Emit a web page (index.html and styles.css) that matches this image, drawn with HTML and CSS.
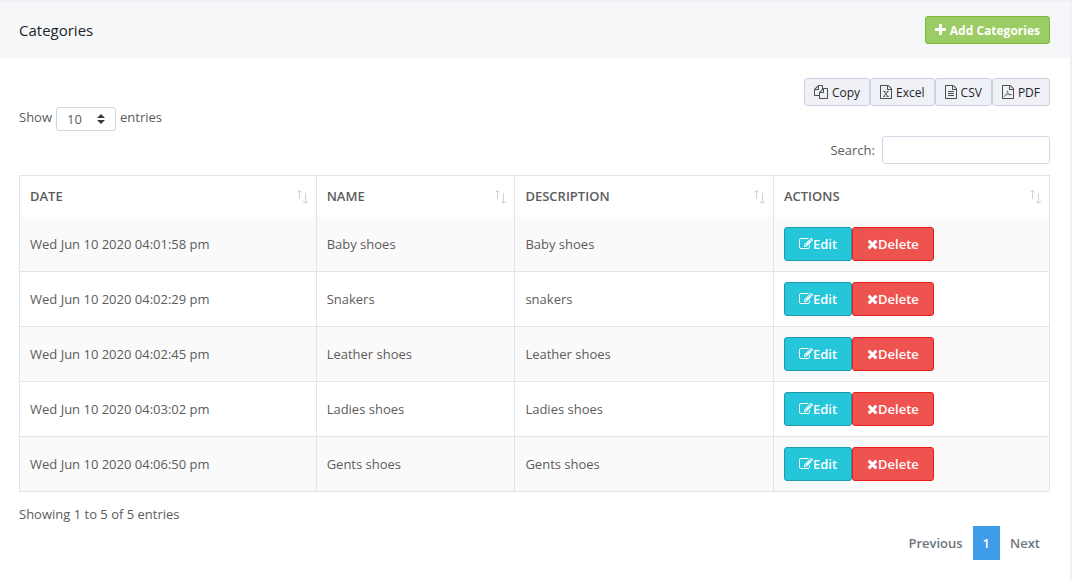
FILE: index.html
```html
<!DOCTYPE html>
<html lang="en">
<head>
    <meta charset="UTF-8">
    <meta name="viewport" content="width=device-width, initial-scale=1.0">
    <title>Categories</title>
    <link rel="stylesheet" href="styles.css">
</head>
<body>
    <svg class="sprite" aria-hidden="true">
        <symbol id="plus" viewBox="192 0 1408 1792"><path d="M1600 736v192q0 40-28 68t-68 28h-416v416q0 40-28 68t-68 28h-192q-40 0-68-28t-28-68v-416h-416q-40 0-68-28t-28-68v-192q0-40 28-68t68-28h416v-416q0-40 28-68t68-28h192q40 0 68 28t28 68v416h416q40 0 68 28t28 68z"/></symbol>
        <symbol id="times" viewBox="192 0 1408 1792"><path d="M1490 1322q0 40-28 68l-136 136q-28 28-68 28t-68-28l-294-294-294 294q-28 28-68 28t-68-28l-136-136q-28-28-28-68t28-68l294-294-294-294q-28-28-28-68t28-68l136-136q28-28 68-28t68 28l294 294 294-294q28-28 68-28t68 28l136 136q28 28 28 68t-28 68l-294 294 294 294q28 28 28 68z"/></symbol>
        <symbol id="edit" viewBox="0 0 1792 1792"><path d="M888 1184l116-116-152-152-116 116v56h96v96h56zm440-720q-16-16-33 1l-350 350q-17 17-1 33t33-1l350-350q17-17 1-33zm80 594v190q0 119-84.500 203.500t-203.500 84.500h-832q-119 0-203.500-84.500t-84.500-203.500v-832q0-119 84.500-203.500t203.500-84.500h832q63 0 117 25 15 7 18 23 3 17-9 29l-49 49q-14 14-32 8-23-6-45-6h-832q-66 0-113 47t-47 113v832q0 66 47 113t113 47h832q66 0 113-47t47-113v-126q0-13 9-22l64-64q15-15 35-7t20 29zm-96-738l288 288-672 672h-288v-288zm444 132l-92 92-288-288 92-92q28-28 68-28t68 28l152 152q28 28 28 68t-28 68z"/></symbol>
        <symbol id="copy" viewBox="0 0 1792 1792"><path d="M1696 384q40 0 68 28t28 68v1216q0 40-28 68t-68 28h-960q-40 0-68-28t-28-68v-288h-544q-40 0-68-28t-28-68v-672q0-40 20-88t48-76l408-408q28-28 76-48t88-20h416q40 0 68 28t28 68v328q68-40 128-40h416zm-544 213l-299 299h299v-299zm-640-384l-299 299h299v-299zm196 647l316-316v-416h-384v416q0 40-28 68t-68 28h-416v640h512v-256q0-40 20-88t48-76zm956 804v-1152h-384v416q0 40-28 68t-68 28h-416v640h896z"/></symbol>
        <symbol id="file" viewBox="128 0 1536 1792"><path d="M1596 380q28 28 48 76t20 88v1152q0 40-28 68t-68 28h-1344q-40 0-68-28t-28-68v-1600q0-40 28-68t68-28h896q40 0 88 20t76 48zm-444-244v376h376q-10-29-22-41l-313-313q-12-12-41-22zm384 1528v-1024h-416q-40 0-68-28t-28-68v-416h-768v1536h1280z"/></symbol>
        <symbol id="excel" viewBox="128 0 1536 1792"><use href="#file" x="128" width="1536" height="1792"/><path fill="none" stroke="currentColor" stroke-width="120" d="M640 820l500 640M1130 820l-500 640M540 820h270M980 820h260M540 1460h240M960 1460h290"/></symbol>
        <symbol id="csv" viewBox="128 0 1536 1792"><use href="#file" x="128" width="1536" height="1792"/><path d="M512 768h768v128h-768zM512 1024h768v128h-768zM512 1280h768v128h-768z"/></symbol>
        <symbol id="pdf" viewBox="128 0 1536 1792"><use href="#file" x="128" width="1536" height="1792"/><path fill="none" stroke="currentColor" stroke-width="80" d="M860 720q-60 0-40 130 30 200 180 340 110 90 260 100 100 0 100-50 0-70-220-60-330 10-560 120-150 80-170 160 40 60 150-100 190-270 300-500 50-130 0-140z"/></symbol>
        <symbol id="sort" viewBox="0 0 12 14"><path fill="none" stroke="currentColor" d="M3.500 9V.5M1.500 2.500l2-2 2 2M9.500 3v10M7 11l2.500 2.500 2.500-2.500"/></symbol>
    </svg>

    <main class="card">
        <header class="card-header">
            <h1 class="card-title">Categories</h1>
            <button type="button" class="btn btn-sm btn-success"><svg class="icon icon-narrow"><use href="#plus"/></svg> Add Categories</button>
        </header>

        <div class="card-body">
            <div class="export-buttons">
                <button type="button" class="btn btn-sm btn-secondary"><svg class="icon"><use href="#copy"/></svg> Copy</button>
                <button type="button" class="btn btn-sm btn-secondary"><svg class="icon icon-file"><use href="#excel"/></svg> Excel</button>
                <button type="button" class="btn btn-sm btn-secondary"><svg class="icon icon-file"><use href="#csv"/></svg> CSV</button>
                <button type="button" class="btn btn-sm btn-secondary"><svg class="icon icon-file"><use href="#pdf"/></svg> PDF</button>
            </div>
            <label class="length">Show
                <select class="length-select">
                    <option>10</option>
                    <option>25</option>
                    <option>50</option>
                    <option>100</option>
                </select>
                entries
            </label>
            <label class="search">Search: <input type="search" class="search-input"></label>

            <table class="table">
                <colgroup>
                    <col class="col-date">
                    <col class="col-name">
                    <col class="col-description">
                    <col class="col-actions">
                </colgroup>
                <thead>
                    <tr>
                        <th><button type="button" class="sort">DATE <svg class="sort-icon"><use href="#sort"/></svg></button></th>
                        <th><button type="button" class="sort">NAME <svg class="sort-icon"><use href="#sort"/></svg></button></th>
                        <th><button type="button" class="sort">DESCRIPTION <svg class="sort-icon"><use href="#sort"/></svg></button></th>
                        <th><button type="button" class="sort">ACTIONS <svg class="sort-icon"><use href="#sort"/></svg></button></th>
                    </tr>
                </thead>
                <tbody>
                    <tr>
                        <td>Wed Jun 10 2020 04:01:58 pm</td>
                        <td>Baby shoes</td>
                        <td>Baby shoes</td>
                        <td>
                            <div class="actions">
                                <button type="button" class="btn btn-info"><svg class="icon"><use href="#edit"/></svg>Edit</button>
                                <button type="button" class="btn btn-danger"><svg class="icon icon-narrow"><use href="#times"/></svg>Delete</button>
                            </div>
                        </td>
                    </tr>
                    <tr>
                        <td>Wed Jun 10 2020 04:02:29 pm</td>
                        <td>Snakers</td>
                        <td>snakers</td>
                        <td>
                            <div class="actions">
                                <button type="button" class="btn btn-info"><svg class="icon"><use href="#edit"/></svg>Edit</button>
                                <button type="button" class="btn btn-danger"><svg class="icon icon-narrow"><use href="#times"/></svg>Delete</button>
                            </div>
                        </td>
                    </tr>
                    <tr>
                        <td>Wed Jun 10 2020 04:02:45 pm</td>
                        <td>Leather shoes</td>
                        <td>Leather shoes</td>
                        <td>
                            <div class="actions">
                                <button type="button" class="btn btn-info"><svg class="icon"><use href="#edit"/></svg>Edit</button>
                                <button type="button" class="btn btn-danger"><svg class="icon icon-narrow"><use href="#times"/></svg>Delete</button>
                            </div>
                        </td>
                    </tr>
                    <tr>
                        <td>Wed Jun 10 2020 04:03:02 pm</td>
                        <td>Ladies shoes</td>
                        <td>Ladies shoes</td>
                        <td>
                            <div class="actions">
                                <button type="button" class="btn btn-info"><svg class="icon"><use href="#edit"/></svg>Edit</button>
                                <button type="button" class="btn btn-danger"><svg class="icon icon-narrow"><use href="#times"/></svg>Delete</button>
                            </div>
                        </td>
                    </tr>
                    <tr>
                        <td>Wed Jun 10 2020 04:06:50 pm</td>
                        <td>Gents shoes</td>
                        <td>Gents shoes</td>
                        <td>
                            <div class="actions">
                                <button type="button" class="btn btn-info"><svg class="icon"><use href="#edit"/></svg>Edit</button>
                                <button type="button" class="btn btn-danger"><svg class="icon icon-narrow"><use href="#times"/></svg>Delete</button>
                            </div>
                        </td>
                    </tr>
                </tbody>
            </table>

            <div class="info">Showing 1 to 5 of 5 entries</div>
            <nav class="pagination">
                <a href="#" class="page-link">Previous</a>
                <a href="#" class="page-link active">1</a>
                <a href="#" class="page-link">Next</a>
            </nav>
        </div>
    </main>
</body>
</html>
```
FILE: styles.css
```css
* {
    box-sizing: border-box;
}

body {
    margin: 0;
    padding: 2px 2px 0 0;
    background-color: #f0f0f5;
    color: #5c5c5c;
    font-family: "Segoe UI", "Open Sans", "Noto Sans", sans-serif;
    font-size: 13px;
    line-height: 21px;
}

button, input, select {
    font: inherit;
    color: inherit;
}

.sprite {
    display: none;
}

.card {
    min-height: calc(100vh - 2px);
    background-color: #fff;
}

.card-header {
    display: flex;
    justify-content: space-between;
    align-items: center;
    padding: 14px 20px 14px 19px;
    background-color: #f6f7f9;
}

.card-title {
    margin: 0;
    font-size: 15px;
    font-weight: 400;
    color: #212529;
}

.card-body {
    display: flex;
    flex-direction: column;
    padding: 20px 20px 20px 19px;
}

/* buttons */
.btn {
    display: inline-flex;
    align-items: center;
    height: 34px;
    padding: 0 14px;
    border: 1px solid transparent;
    border-radius: 3px;
    font-weight: 600;
    white-space: nowrap;
    cursor: pointer;
}

.btn-sm {
    gap: 4px;
    height: 28px;
    padding: 0 9px;
    font-size: 12px;
}

.btn-success {
    background-color: #9ccc65;
    border-color: #7cb83a;
    color: #fff;
    font-weight: 700;
}

.btn-secondary {
    background-color: #f0f1f6;
    border-color: #cbd2e0;
    color: #212529;
    font-weight: 500;
}

.btn-secondary .icon {
    opacity: 0.8;
}

.btn-info {
    background-color: #26c6da;
    border-color: #1e9aaa;
    color: #fff;
}

.btn-danger {
    background-color: #ef5350;
    border-color: #eb1c18;
    color: #fff;
}

.icon {
    width: 14px;
    height: 14px;
    fill: currentColor;
}

.icon-file {
    width: 12px;
}

.icon-narrow {
    width: 11px;
}

.export-buttons {
    display: flex;
    align-self: flex-end;
}

/* length and search */
.length {
    display: flex;
    align-items: flex-start;
    align-self: flex-start;
    gap: 4px;
    margin-top: 1px;
}

.length-select {
    appearance: none;
    width: 60px;
    height: 24px;
    padding: 0 10px;
    border: 1px solid #d0d7e5;
    border-radius: 3px;
    background: #fff url("data:image/svg+xml,%3Csvg xmlns='http://www.w3.org/2000/svg' viewBox='0 0 4 5'%3E%3Cpath fill='%23343a40' d='M2 0L0 2h4zm0 5L0 3h4z'/%3E%3C/svg%3E") no-repeat right 10px center / 8px 10px;
}

.search {
    display: flex;
    align-items: center;
    align-self: flex-end;
    gap: 7px;
    margin-top: 5px;
}

.search-input {
    width: 168px;
    height: 28px;
    padding: 4px 8px;
    border: 1px solid #d0d7e5;
    border-radius: 3px;
    background-color: #fff;
}

/* table */
.table {
    width: 100%;
    margin-top: 11px;
    border: 1px solid #e4e4ed;
    border-collapse: collapse;
    table-layout: fixed;
}

.col-date {
    width: 28.8%;
}

.col-name {
    width: 19.3%;
}

.col-description {
    width: 25.1%;
}

.col-actions {
    width: 26.8%;
}

.table th, .table td {
    padding: 10px;
    border-left: 1px solid #e4e4ed;
    text-align: left;
}

.table th {
    padding-right: 8px;
}

.table td {
    border-bottom: 1px solid #e4e4ed;
}

.table tbody tr:nth-child(odd) {
    background-color: #fafafa;
}

.sort {
    display: flex;
    justify-content: space-between;
    align-items: center;
    width: 100%;
    padding: 0;
    border: 0;
    background: none;
    font-weight: 600;
    cursor: pointer;
}

.sort-icon {
    width: 12px;
    height: 14px;
    color: #d2d2d4;
}

.actions {
    display: flex;
}

.info {
    margin-top: 12px;
}

.pagination {
    display: flex;
    align-self: flex-end;
    margin-top: 1px;
}

.page-link {
    padding: 7px 10px;
    color: #6c757d;
    font-weight: 600;
    line-height: 20px;
    text-decoration: none;
}

.page-link.active {
    background-color: #3f9ce8;
    color: #fff;
}
```
